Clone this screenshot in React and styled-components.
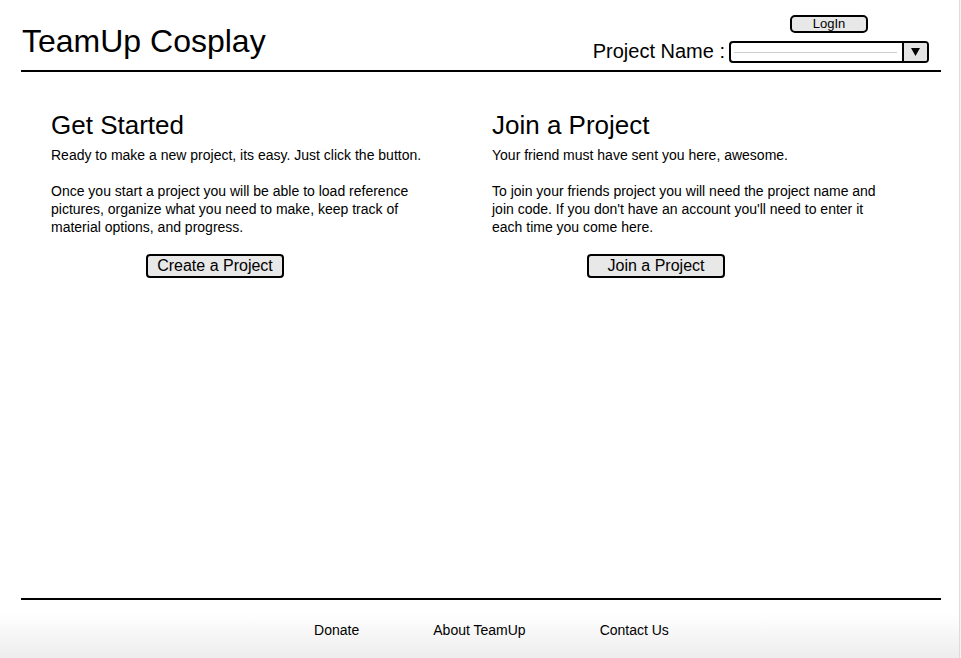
import styled, { createGlobalStyle } from "styled-components";

const GlobalStyle = createGlobalStyle`
  html, body {
    margin: 0;
    padding: 0;
    background: #f4f4f4;
  }
  body {
    font-family: "Liberation Sans", Arial, Helvetica, sans-serif;
    color: #000;
  }
`;

const Page = styled.div`
  min-height: 100vh;
  display: flex;
  flex-direction: column;
  background: #fff;
  margin-right: 1px;
  border-right: 1px solid #dcdcdc;
`;

const Header = styled.header`
  display: flex;
  justify-content: space-between;
  align-items: flex-end;
  margin: 0 18px 0 21px;
  padding: 15px 12px 7px 1px;
  border-bottom: 2px solid #000;
`;

const Title = styled.h1`
  margin: 0 0 6px;
  font-size: 32px;
  line-height: 32px;
  font-weight: 400;
`;

const ProjectPicker = styled.div`
  display: flex;
  align-items: flex-end;
  gap: 4px;
`;

const PickerLabel = styled.span`
  font-size: 20px;
  line-height: 22px;
  margin-bottom: 1px;
`;

const PickerColumn = styled.div`
  display: flex;
  flex-direction: column;
  align-items: center;
  gap: 8px;
`;

const Button = styled.button`
  font-family: inherit;
  color: #000;
  background: #e8e8e8;
  border: 2px solid #000;
  border-radius: ${(p) => (p.$small ? "5px" : "4px")};
  font-size: ${(p) => (p.$small ? "13px" : "16px")};
  line-height: ${(p) => (p.$small ? "14px" : "18px")};
  padding: ${(p) => (p.$small ? "0" : "1px 0")};
  width: ${(p) => (p.$small ? "78px" : "138px")};
  text-align: center;
  cursor: pointer;
`;

const Select = styled.div`
  width: 200px;
  height: 22px;
  box-sizing: border-box;
  border: 2px solid #000;
  border-radius: 4px;
  display: flex;
  overflow: hidden;
  background: #fff;
`;

const SelectField = styled.div`
  flex: 1;
  display: flex;
  align-items: center;
  padding: 0 5px 0 3px;
  &::after {
    content: "";
    flex: 1;
    height: 1px;
    background: #cfcfcf;
  }
`;

const SelectArrow = styled.div`
  width: 23px;
  border-left: 2px solid #000;
  background: #e4e4e4;
  display: flex;
  align-items: center;
  justify-content: center;
  svg {
    display: block;
  }
`;

const Main = styled.main`
  flex: 1;
  display: grid;
  grid-template-columns: 441px 1fr;
  padding: 38px 18px 0 51px;
`;

const Column = styled.section`
  width: 395px;
`;

const Heading = styled.h2`
  margin: 0 0 6px;
  font-size: 26px;
  line-height: 30px;
  font-weight: 400;
`;

const Text = styled.p`
  margin: 0 0 18px;
  font-size: 14px;
  line-height: 18px;
`;

const ButtonRow = styled.div`
  padding-left: 95px;
`;

const Footer = styled.footer`
  background: linear-gradient(to bottom, #fff 0%, #fff 25%, #ededed 100%);
`;

const FooterBar = styled.nav`
  margin: 0 18px 0 21px;
  border-top: 2px solid #000;
  padding: 22px 0 20px 21px;
  display: flex;
  justify-content: center;
  gap: 74px;
`;

const FooterLink = styled.a`
  font-size: 14px;
  line-height: 16px;
  color: #000;
  text-decoration: none;
  cursor: pointer;
`;

export default function App() {
  return (
    <>
      <GlobalStyle />
      <Page>
        <Header>
          <Title>TeamUp Cosplay</Title>
          <ProjectPicker>
            <PickerLabel>Project Name :</PickerLabel>
            <PickerColumn>
              <Button $small>LogIn</Button>
              <Select>
                <SelectField />
                <SelectArrow>
                  <svg width="9" height="8" viewBox="0 0 9 8">
                    <path d="M0 0 H9 L4.5 8 Z" fill="#000" />
                  </svg>
                </SelectArrow>
              </Select>
            </PickerColumn>
          </ProjectPicker>
        </Header>

        <Main>
          <Column>
            <Heading>Get Started</Heading>
            <Text>Ready to make a new project, its easy. Just click the button.</Text>
            <Text>
              Once you start a project you will be able to load reference
              pictures, organize what you need to make, keep track of material
              options, and progress.
            </Text>
            <ButtonRow>
              <Button>Create a Project</Button>
            </ButtonRow>
          </Column>
          <Column>
            <Heading>Join a Project</Heading>
            <Text>Your friend must have sent you here, awesome.</Text>
            <Text>
              To join your friends project you will need the project name and
              join code. If you don't have an account you'll need to enter it
              each time you come here.
            </Text>
            <ButtonRow>
              <Button>Join a Project</Button>
            </ButtonRow>
          </Column>
        </Main>

        <Footer>
          <FooterBar>
            <FooterLink>Donate</FooterLink>
            <FooterLink>About TeamUp</FooterLink>
            <FooterLink>Contact Us</FooterLink>
          </FooterBar>
        </Footer>
      </Page>
    </>
  );
}
